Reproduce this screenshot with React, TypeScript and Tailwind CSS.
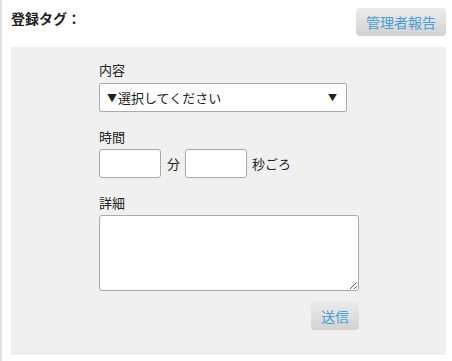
export default function App() {
  return (
    <div
      className="w-[452px] h-[361px] bg-white border-l-2 border-[#e4e4e4] text-[#333] overflow-hidden"
      style={{ fontFamily: '"Noto Sans CJK JP", "Noto Sans", sans-serif' }}
    >
      <div className="pl-[9px] pr-[6px] pt-[8px]">
        <div className="flex items-start justify-between h-[39px]">
          <h2 className="text-[14px] font-bold leading-[18px] pt-[1px] text-[#222]">登録タグ：</h2>
          <button className="h-[28px] px-[10px] rounded-[4px] bg-gradient-to-b from-[#ececec] to-[#d2d2d2] text-[#4a9fd4] text-[14px] leading-none">
            管理者報告
          </button>
        </div>

        <div className="bg-[#f0f0f0] h-[308px] pl-[88px] pt-[14px]">
          <div className="flex flex-col">
            <label className="text-[13px] leading-[18px] text-[#222]">内容</label>
            <div className="mt-[4px] w-[248px] h-[29px] bg-white border border-[#aaa] rounded-[2px] flex items-center justify-between pl-[7px] pr-[9px]">
              <span className="text-[13px] text-[#222] flex items-center">
                <span className="text-[10px] mr-[1px]">▼</span>選択してください
              </span>
              <span className="text-[9px] text-[#222]">▼</span>
            </div>

            <label className="mt-[16px] text-[13px] leading-[18px] text-[#222]">時間</label>
            <div className="mt-[3px] flex items-center">
              <input className="w-[62px] h-[29px] bg-white border border-[#aaa] rounded-[3px]" />
              <span className="ml-[6px] mr-[5px] text-[13px] text-[#222]">分</span>
              <input className="w-[62px] h-[29px] bg-white border border-[#aaa] rounded-[3px]" />
              <span className="ml-[5px] text-[13px] text-[#222]">秒ごろ</span>
            </div>

            <label className="mt-[16px] text-[13px] leading-[18px] text-[#222]">詳細</label>
            <textarea className="mt-[3px] w-[260px] h-[76px] bg-white border border-[#aaa] rounded-[3px] resize" />

            <div className="w-[260px] flex justify-end mt-[10px]">
              <button className="w-[48px] h-[29px] rounded-[4px] bg-gradient-to-b from-[#ececec] to-[#d2d2d2] text-[#4a9fd4] text-[14px] leading-none">
                送信
              </button>
            </div>
          </div>
        </div>
      </div>
    </div>
  );
}
